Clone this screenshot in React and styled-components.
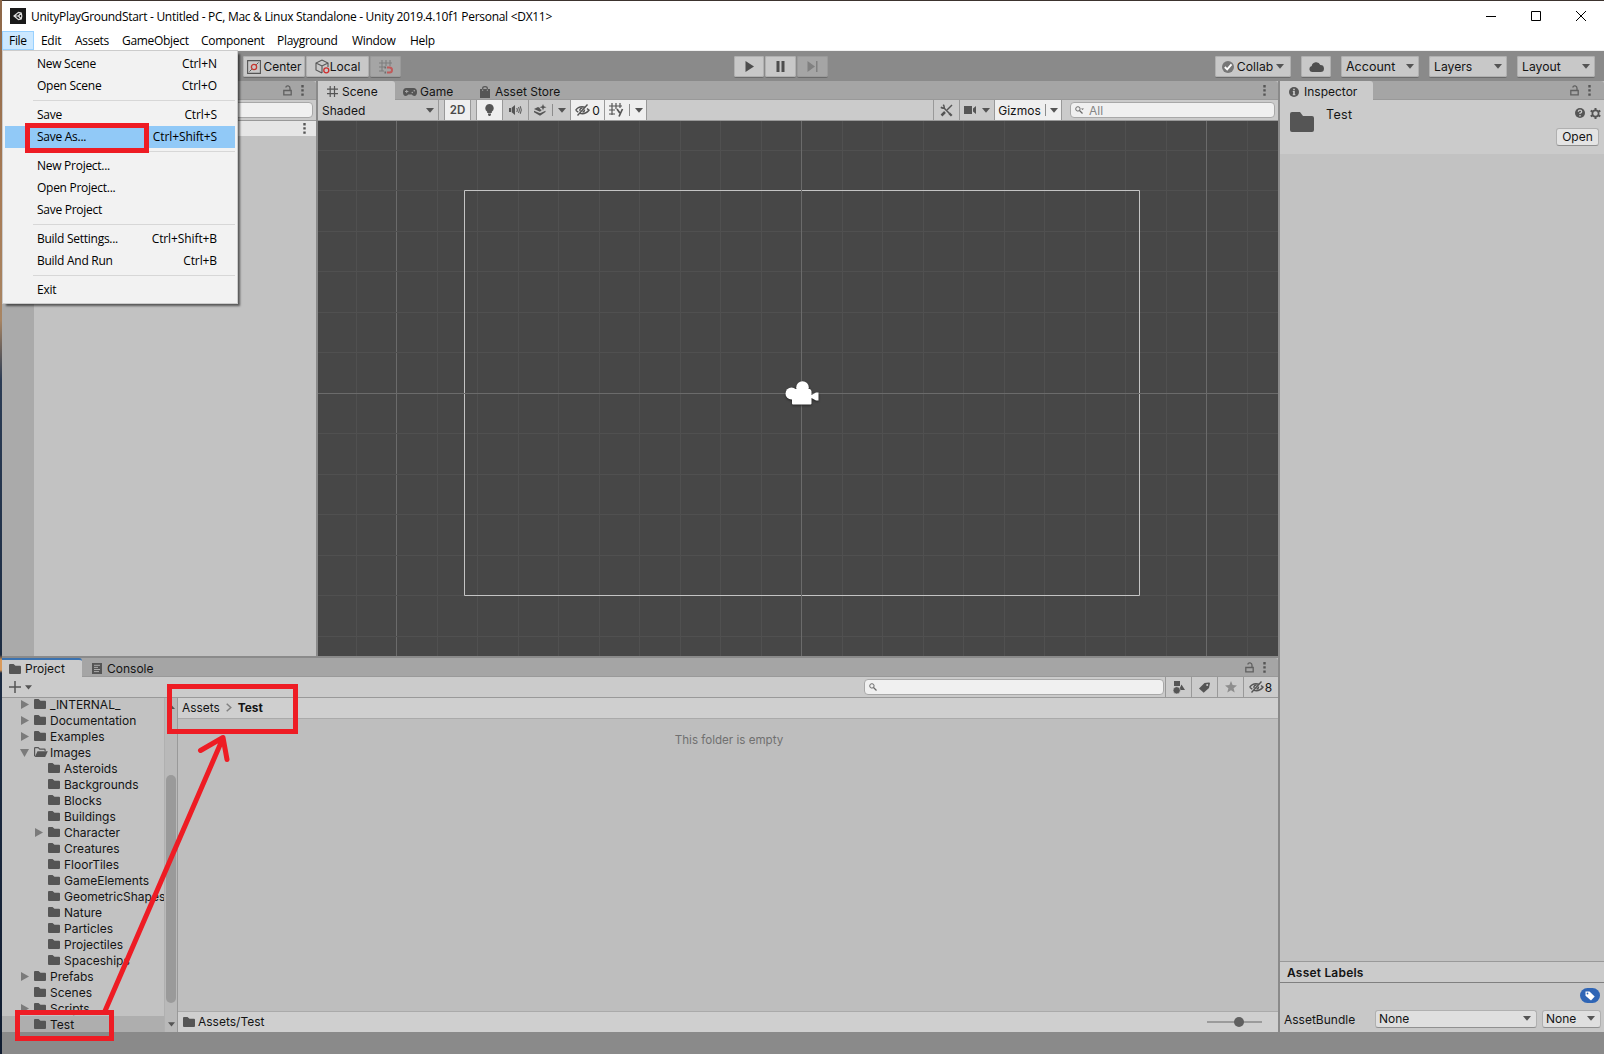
import React from "react";
import styled, { createGlobalStyle } from "styled-components";

const GlobalStyle = createGlobalStyle`
  * {
    box-sizing: border-box;
  }
  body {
    margin: 0;
    overflow: hidden;
    font-family: Inter, "Liberation Sans", sans-serif;
    font-size: 12px;
    color: #141414;
  }
  svg {
    display: block;
    flex: none;
  }
`;

const Desktop = styled.div`
  position: relative;
  display: flex;
  width: 1604px;
  height: 1054px;
`;

const DesktopEdge = styled.div`
  width: 2px;
  background: linear-gradient(#8d6748, #a87c56 200px, #a88563 320px, #2b3c55 380px, #1c2c43 655px, #d99a5b 660px, #d99a5b 670px, #1c2c43 673px, #101c30);
`;

const Window = styled.div`
  display: flex;
  flex-direction: column;
  width: 1602px;
  background: #8a8a8a;
`;

const TitleBar = styled.div`
  display: flex;
  align-items: center;
  height: 31px;
  padding: 0 18px 0 8px;
  border-top: 1px solid #3c332e;
  background: #fff;
  font-family: "Open Sans", "Noto Sans", sans-serif;
`;

const Title = styled.span`
  margin-left: 5px;
  font-size: 12px;
  letter-spacing: -0.29px;
  white-space: nowrap;
  color: #000;
`;

const WindowButtons = styled.div`
  display: flex;
  gap: 35px;
  margin-left: auto;
`;

const MenuBar = styled.div`
  display: flex;
  height: 20px;
  background: #fff;
  border-bottom: 1px solid #f0f0f0;
  font-family: "Open Sans", "Noto Sans", sans-serif;
`;

const MenuTitle = styled.div`
  width: ${(p) => p.$w}px;
  height: 19px;
  padding-left: ${(p) => (p.$open ? 6 : 7)}px;
  line-height: ${(p) => (p.$open ? 17 : 19)}px;
  letter-spacing: -0.3px;
  white-space: nowrap;
  color: #000;
  background: ${(p) => (p.$open ? "#cce8ff" : "none")};
  border: ${(p) => (p.$open ? "1px solid #99d1ff" : "none")};
`;

const Menu = styled.div`
  position: absolute;
  left: 2px;
  top: 50px;
  width: 236px;
  height: 254px;
  padding: 2px;
  border: 1px solid #ccc;
  background: #f2f2f2;
  box-shadow: 3px 3px 2px -1px rgba(0, 0, 0, 0.55);
  font-family: "Open Sans", "Noto Sans", sans-serif;
  color: #000;
`;

const MenuItem = styled.div`
  display: flex;
  justify-content: space-between;
  height: 22px;
  line-height: 22px;
  padding: 0 18px 0 32px;
  letter-spacing: -0.27px;
  background: ${(p) => (p.$active ? "#91c9f7" : "none")};
`;

const Shortcut = styled.span`
  letter-spacing: -0.1px;
`;

const MenuLine = styled.div`
  height: 1px;
  margin: 3px 0 3px 28px;
  background: #d7d7d7;
`;

const Toolbar = styled.div`
  display: flex;
  height: 30px;
  padding: 5px 9px 0 241px;
  background: #8a8a8a;
`;

const ButtonGroup = styled.div`
  display: flex;
  gap: ${(p) => p.$gap || 1}px;
  margin-left: ${(p) => p.$left || "0"};
`;

const ToolButton = styled.div`
  display: flex;
  align-items: center;
  justify-content: ${(p) => (p.$spread ? "space-between" : "center")};
  gap: ${(p) => (p.$gap === undefined ? 3 : p.$gap)}px;
  width: ${(p) => p.$w}px;
  height: 21px;
  padding: 0 ${(p) => (p.$spread ? 5 : 0)}px;
  border-radius: 2px;
  font-size: ${(p) => p.$size || 12.5}px;
  background: ${(p) => (p.$disabled ? "#a5a5a5" : "#c8c8c8")};
  box-shadow: inset 0 0 0 1px ${(p) => (p.$disabled ? "#9a9a9a" : "#b0b0b0")}, 0 1px 0 #6b6b6b;
`;

const Workspace = styled.div`
  display: flex;
  gap: 2px;
  height: 951px;
`;

const LeftSide = styled.div`
  display: flex;
  flex-direction: column;
  gap: 2px;
  width: 1276px;
`;

const TopPanels = styled.div`
  display: flex;
  gap: 2px;
  height: 575px;
`;

const Panel = styled.section`
  display: flex;
  flex-direction: column;
  width: ${(p) => p.$w}px;
  height: ${(p) => p.$h}px;
  background: #c2c2c2;
`;

const TabBar = styled.div`
  display: flex;
  height: 19px;
  flex: none;
  background: #a5a5a5;
  border-bottom: 1px solid #999;
  border-radius: 3px 3px 0 0;
`;

const Tab = styled.div`
  display: flex;
  align-items: center;
  gap: ${(p) => p.$gap || 5}px;
  width: ${(p) => p.$w}px;
  height: 19px;
  padding: 1px 0 0 ${(p) => p.$pad}px;
  white-space: nowrap;
  border-radius: 0 3px 0 0;
  border-top: ${(p) => (p.$focused ? "2px solid #3a72b0" : "none")};
  padding-top: ${(p) => (p.$focused ? 0 : 2)}px;
  background: ${(p) => (p.$active ? "#cbcbcb" : "none")};
`;

const TabActions = styled.div`
  display: flex;
  align-items: center;
  gap: 9px;
  margin-left: auto;
  padding-right: ${(p) => p.$right || 12}px;
`;

const SubBar = styled.div`
  display: flex;
  align-items: center;
  flex: none;
  height: 21px;
  padding: 0 ${(p) => p.$right || 0}px 0 ${(p) => p.$pad || 0}px;
  background: #cbcbcb;
  border-bottom: 1px solid #999;
`;

const BarCell = styled.div`
  display: flex;
  align-items: center;
  flex: none;
  justify-content: ${(p) => p.$align || "center"};
  gap: ${(p) => p.$gap || 0}px;
  width: ${(p) => p.$w}px;
  height: 20px;
  margin-left: ${(p) => p.$left || 0}px;
  padding: 0 ${(p) => p.$pad || 0}px;
  border-left: ${(p) => (p.$flat ? "none" : "1px solid #999")};
  border-right: ${(p) => (p.$end ? "1px solid #999" : "none")};
  background: ${(p) => (p.$on ? "#efefef" : "none")};
`;

const CellLine = styled.i`
  flex: none;
  width: 1px;
  height: 12px;
  background: #8c8c8c;
`;

const ModeLabel = styled.b`
  font-size: 11.5px;
  font-weight: 600;
  color: #4a4a4a;
`;

const SearchField = styled.div`
  display: flex;
  align-items: center;
  flex: none;
  gap: 5px;
  width: ${(p) => p.$w}px;
  height: 16px;
  margin-left: ${(p) => p.$left || 0}px;
  margin-right: ${(p) => p.$right || 0}px;
  padding-left: 4px;
  border: 1px solid #a8a8a8;
  border-radius: 4px;
  background: #f0f0f0;
  color: #858585;
`;

const HierarchyBody = styled.div`
  flex: 1;
  display: flex;
`;

const Gutter = styled.div`
  width: 32px;
  background: #aaa;
`;

const HierarchyRow = styled.div`
  display: flex;
  align-items: center;
  justify-content: flex-end;
  flex: 1;
  height: 15px;
  padding-right: 10px;
  background: #e6e6e6;
`;

const SceneView = styled.div`
  height: 535px;
  background: #474747;
`;

const Project = styled(Panel)`
  background: #bebebe;
`;

const ProjectBody = styled.div`
  display: flex;
  height: 334px;
`;

const Tree = styled.div`
  width: 162px;
  height: 334px;
  overflow: hidden;
  background: #c2c2c2;
`;

const TreeList = styled.div`
  margin-top: -2px;
`;

const TreeRow = styled.div`
  display: flex;
  align-items: center;
  height: 16px;
  padding-left: ${(p) => 4 + p.$depth * 14}px;
  line-height: 15px;
  white-space: nowrap;
  background: ${(p) => (p.$selected ? "#aeaeae" : "none")};
`;

const Fold = styled.span`
  width: 14px;
  flex: none;
`;

const TreeLabel = styled.span`
  margin-left: ${(p) => (p.$open ? 2 : 4)}px;
`;

const ScrollTrack = styled.div`
  display: flex;
  flex-direction: column;
  align-items: center;
  width: 14px;
  padding: 7px 0 5px;
  background: #b9b9b9;
  border-left: 1px solid #b0b0b0;
  border-right: 1px solid #999;
`;

const ScrollThumb = styled.div`
  width: 10px;
  height: 228px;
  margin: 66px 0 auto;
  border-radius: 5px;
  background: #9a9a9a;
`;

const Assets = styled.div`
  display: flex;
  flex-direction: column;
  width: 1100px;
`;

const Breadcrumbs = styled.div`
  display: flex;
  align-items: center;
  gap: 6px;
  height: 21px;
  padding: 0 0 2px 4px;
  background: #cfcfcf;
  border-bottom: 1px solid #aaa;
  font-size: 11.9px;
`;

const EmptyNote = styled.div`
  flex: 1;
  padding: 14px 0 0 2px;
  font-size: 11.6px;
  text-align: center;
  color: #707070;
`;

const AssetsFooter = styled.div`
  display: flex;
  align-items: center;
  gap: 3px;
  height: 21px;
  padding: 0 16px 1px 5px;
  background: #cfcfcf;
  border-top: 1px solid #aaa;
`;

const InspectorHeader = styled.div`
  display: flex;
  height: 54px;
  padding: 8px 3px 0 10px;
  background: #cbcbcb;
`;

const InspectorName = styled.div`
  margin: -1px 0 0 12px;
  font-size: 12.5px;
  letter-spacing: 0.3px;
`;

const HeaderTools = styled.div`
  display: flex;
  flex-direction: column;
  align-items: flex-end;
  gap: 9px;
  margin-left: auto;
`;

const OpenButton = styled.div`
  width: 43px;
  height: 18px;
  margin-right: 2px;
  line-height: 16px;
  text-align: center;
  border: 1px solid #b0b0b0;
  border-bottom-color: #8f8f8f;
  border-radius: 3px;
  background: #e4e4e4;
`;

const IconRow = styled.div`
  display: flex;
  gap: 5px;
  justify-content: flex-end;
`;

const InspectorBody = styled.div`
  flex: 1;
`;

const LabelsTitle = styled.div`
  height: 22px;
  padding-left: 7px;
  line-height: 22px;
  font-weight: 600;
  letter-spacing: 0.2px;
  border-top: 1px solid #999;
  border-bottom: 1px solid #808080;
  background: #cbcbcb;
`;

const LabelsBody = styled.div`
  height: 49px;
  padding: 5px 3px 0 4px;
  background: #c8c8c8;
`;

const LabelPill = styled.div`
  display: flex;
  align-items: center;
  justify-content: center;
  width: 20px;
  height: 15px;
  margin-left: auto;
  margin-right: 1px;
  border-radius: 8px;
  background: #2f65b5;
`;

const BundleRow = styled.div`
  display: flex;
  align-items: center;
  gap: 5px;
  margin-top: 7px;
`;

const BundleLabel = styled.span`
  width: 86px;
`;

const Select = styled.div`
  display: flex;
  align-items: center;
  justify-content: space-between;
  width: ${(p) => p.$w}px;
  height: 18px;
  padding: 0 5px 1px 3px;
  border: 1px solid #b0b0b0;
  border-bottom-color: #909090;
  border-radius: 3px;
  background: #dfdfdf;
`;

const Annotations = styled.svg`
  position: absolute;
  left: 0;
  top: 0;
`;

const INK = "#555";

const Caret = ({ w = 8 }) => (
  <svg width={w} height="5" viewBox="0 0 8 5">
    <path d="M0 0h8L4 4.8z" fill="#545454" />
  </svg>
);

const Dots = () => (
  <svg width="3" height="11" viewBox="0 0 3 11" fill={INK}>
    <path d="M.3 0h2.4v2.4H.3zM.3 4.2h2.4v2.4H.3zM.3 8.4h2.4v2.4H.3z" />
  </svg>
);

const Lock = () => (
  <svg width="9" height="11" viewBox="0 0 9 11" fill="none" stroke="#606060" strokeWidth="1.3">
    <path d="M.8 5.5h7.4v4.4H.8zM7 5.5V3.2A2.2 2.2 0 0 0 2.7 2.5" />
  </svg>
);

const Folder = ({ w = 12, h = 10 }) => (
  <svg width={w} height={h} viewBox="0 0 12 10" preserveAspectRatio="none">
    <path d="M0 1Q0 0 1 0h3.5l2 1.8H11q1 0 1 1V9q0 1-1 1H1Q0 10 0 9z" fill={INK} />
  </svg>
);

const FolderOpen = () => (
  <svg width="14" height="10" viewBox="0 0 14 10">
    <path d="M.6 9.3V1.2Q.6.6 1.2.6h3l1.6 1.6h4.6q.7 0 .7.7v1" fill="none" stroke={INK} strokeWidth="1.2" />
    <path d="M3.5 4.2h10.3L11.2 10H.8z" fill={INK} />
  </svg>
);

const Triangle = ({ open }) => (
  <svg width="9" height="9" viewBox="0 0 9 9">
    <path d={open ? "M0 1h9L4.5 9z" : "M1 0v9l8-4.5z"} fill="#7b7b7b" />
  </svg>
);

const Hash = () => (
  <svg width="11" height="11" viewBox="0 0 11 11" stroke={INK} strokeWidth="1.2">
    <path d="M3.2 0v11M7.5 0v11M0 3.2h11M0 7.6h11" />
  </svg>
);

const Gamepad = () => (
  <svg width="14" height="8" viewBox="0 0 14 8">
    <path d="M3.5 0h7Q14 .3 14 4t-2.7 4Q9.5 7.700 8.800 6.500H5.200Q4.500 7.700 2.700 8 0 8 0 4T3.500 0z" fill={INK} />
    <path d="M2 3.500h3.400M3.700 1.900v3.300" stroke="#a5a5a5" strokeWidth="1" />
    <circle cx="9.300" cy="4.500" r=".8" fill="#a5a5a5" />
    <circle cx="11.300" cy="2.800" r=".8" fill="#a5a5a5" />
  </svg>
);

const Bag = () => (
  <svg width="10" height="12" viewBox="0 0 10 12">
    <path d="M0 3h10v9H0z" fill={INK} />
    <path d="M2.700 5V2.200Q2.700.6 5 .6t2.300 1.600V5" fill="none" stroke={INK} strokeWidth="1.200" />
    <path d="M2.700 5V3.500M7.300 5V3.500" stroke="#a5a5a5" strokeWidth=".9" />
  </svg>
);

const ConsoleIcon = () => (
  <svg width="10" height="11" viewBox="0 0 10 11">
    <path d="M0 0h10v11H0z" fill={INK} />
    <path d="M2 2.300h6M2 4.400h4M2 6.500h6M2 8.600h5" stroke="#b4b4b4" strokeWidth=".9" />
  </svg>
);

const InfoIcon = () => (
  <svg width="10" height="10" viewBox="0 0 10 10">
    <circle cx="5" cy="5" r="5" fill={INK} />
    <path d="M4.200 1.700h1.600v1.500H4.200zM3.800 4.100h2V7.300h.6v1H3.700v-1h.5V5h-.4z" fill="#cbcbcb" />
  </svg>
);

const UnityIcon = () => (
  <svg width="16" height="16" viewBox="0 0 16 16">
    <path d="M0 0h16v16H0z" fill="#191919" />
    <path d="M4 8l4.500-3.700 2.700.7.600 3-.6 3-2.700.7zM4 8h4.500M8.500 8l2.700-3M8.500 8l2.700 3" fill="none" stroke="#e2e2e2" strokeWidth="1.200" />
  </svg>
);

const PivotIcon = () => (
  <svg width="14" height="14" viewBox="0 0 14 14" fill="none">
    <path d="M.6.600h12.800v12.800H.6z" stroke={INK} strokeWidth="1.100" />
    <path d="M2.500 11.500l2.300-2.300M9.200 4.800l2.300-2.300" stroke={INK} />
    <circle cx="7" cy="7" r="2.600" stroke="#c6352e" strokeWidth="1.300" />
  </svg>
);

const CubeIcon = () => (
  <svg width="15" height="15" viewBox="0 0 15 15" fill="none">
    <path d="M7 14L1 11V4l6-3 6 3v4M1 4l6 3 6-3M7 7v7" stroke={INK} strokeWidth="1.100" />
    <circle cx="11.300" cy="11.300" r="2.500" fill="#c8c8c8" stroke="#d02c2c" strokeWidth="1.300" />
  </svg>
);

const SnapIcon = () => (
  <svg width="14" height="14" viewBox="0 0 14 14" fill="none">
    <path d="M3 0v11M7 0v6M11 0v6M0 3h13M0 7h6M0 11h5" stroke="#7e7e7e" strokeWidth="1.100" />
    <path d="M8 7.500h2.500a2.500 2.500 0 0 1 0 5H8" stroke="#c05a5a" strokeWidth="2" />
    <path d="M5.500 7.500h1.600M5.500 12.500h1.600" stroke="#6e6e6e" strokeWidth="2" />
  </svg>
);

const PlayIcon = () => (
  <svg width="9" height="11" viewBox="0 0 9 11">
    <path d="M.5 0v11L9 5.500z" fill="#4d4d4d" />
  </svg>
);

const PauseIcon = () => (
  <svg width="9" height="11" viewBox="0 0 9 11">
    <path d="M.5 0h3v11h-3zM5.500 0h3v11h-3z" fill="#4d4d4d" />
  </svg>
);

const StepIcon = () => (
  <svg width="11" height="11" viewBox="0 0 11 11">
    <path d="M.5 0v11L8 5.500zM9 0h1.500v11H9z" fill="#808080" />
  </svg>
);

const CollabIcon = () => (
  <svg width="12" height="12" viewBox="0 0 12 12">
    <circle cx="6" cy="6" r="6" fill="#777" />
    <path d="M2.800 6l2.400 2.400 4.300-5" fill="none" stroke="#fff" strokeWidth="1.900" />
  </svg>
);

const CloudIcon = () => (
  <svg width="15" height="11" viewBox="0 0 15 11">
    <path d="M3 11a3 3 0 0 1-.3-5.900A4.500 4.500 0 0 1 11.300 4 3.500 3.500 0 0 1 11.600 11z" fill="#4f4f4f" />
  </svg>
);

const Bulb = () => (
  <svg width="9" height="12" viewBox="0 0 9 12">
    <path d="M4.500 0a4.200 4.200 0 0 1 2.300 7.700V9H2.200V7.700A4.200 4.200 0 0 1 4.500 0zM3 9.600h3v1L5.300 12H3.700L3 10.600z" fill={INK} />
  </svg>
);

const Speaker = () => (
  <svg width="13" height="10" viewBox="0 0 13 10">
    <path d="M0 3h2v4H0zM2.700 2.800L6 0v10L2.700 7.200z" fill={INK} />
    <path d="M7.800 3Q9 5 7.800 7M9.600 2q1.600 3 0 6M11.300 1.200q2 3.800 0 7.600" fill="none" stroke={INK} />
  </svg>
);

const Effects = () => (
  <svg width="13" height="12" viewBox="0 0 13 12">
    <path d="M0 5l4-2 1.500.8Q6 5.500 7.800 6L6 7.700zM0 6.700l6 2.500 5.500-2.500V8L6 11.800 0 8.200z" fill={INK} />
    <path d="M9 0l.9 2.300 2.600.9-2.600.9L9 6.600l-.9-2.500-2.600-.9 2.600-.9z" fill={INK} />
  </svg>
);

const EyeOff = () => (
  <svg width="15" height="12" viewBox="0 0 15 12" fill="none" stroke={INK} strokeWidth="1.400">
    <path d="M.7 6.200Q3 2.700 7 2.700q1.800 0 3 .6M12 4.500l2 1.700Q11 9.700 7.500 9.700 6 9.700 5 9.300M3.300 8.300L.7 6.200" />
    <path d="M5 7.200V5.400Q5.500 4 7.500 4M9.500 5.500Q9.500 8 7.500 8" />
    <path d="M2.500 11.500L12.500.5" />
  </svg>
);

const GridAxis = () => (
  <svg width="15" height="14" viewBox="0 0 15 14" fill="none" stroke={INK} strokeWidth="1.200">
    <path d="M3 0v12M7 0v6M11 0v5M0 3h13M0 7h6M0 11h6" />
    <path d="M8 6l2.800 4M13.500 6l-3.500 7.500" strokeWidth="1.700" />
  </svg>
);

const Tools = () => (
  <svg width="13" height="13" viewBox="0 0 13 13" fill="none" stroke={INK}>
    <path d="M3.500 3.500l6 6" strokeWidth="1.500" />
    <path d="M9.200 9.200l2.500 2.500" strokeWidth="2.300" />
    <path d="M.8 3.300q3 1.500 3.400.5T3.300.7" strokeWidth="1.600" />
    <path d="M12 1L7 6" strokeWidth="1.400" />
    <path d="M5 8l-3.500 3.500" strokeWidth="2.500" />
  </svg>
);

const VideoIcon = () => (
  <svg width="13" height="10" viewBox="0 0 13 10">
    <path d="M0 1h8v8H0zM9 3.500L12 1v8L9 6.500z" fill={INK} />
  </svg>
);

const SearchIcon = ({ menu }) => (
  <svg width="9" height="8" viewBox="0 0 9 8" fill="none" stroke="#6a6a6a">
    <circle cx="2.900" cy="2.900" r="2.200" />
    <path d="M4.500 4.500L7.500 7.500" strokeWidth="1.300" />
    {menu && <path d="M6 2.500h3L7.500 4z" fill="#6a6a6a" stroke="none" />}
  </svg>
);

const Shapes = () => (
  <svg width="12" height="13" viewBox="0 0 12 13">
    <path d="M1 0h6v5H1zM8.500 3.500L12 9H6z" fill={INK} />
    <circle cx="3.700" cy="9.300" r="3.600" fill={INK} stroke="#cbcbcb" strokeWidth=".6" />
  </svg>
);

const TagIcon = () => (
  <svg width="11" height="11" viewBox="0 0 11 11">
    <path d="M0 6.500L5.500 1 10 .5q1 0 .9 1L10 6l-5.300 4.800z" fill={INK} />
    <circle cx="8.200" cy="3" r="1" fill="#cbcbcb" />
  </svg>
);

const LabelIcon = () => (
  <svg width="10" height="10" viewBox="0 0 10 10">
    <path d="M.5.500h4L9.700 5.500 6 9.500.5 4.700z" fill="#fff" />
    <circle cx="2.500" cy="2.500" r=".9" fill="#2f65b5" />
  </svg>
);

const Star = () => (
  <svg width="12" height="12" viewBox="0 0 12 12">
    <path d="M6 0l1.600 4.100 4.400.3-3.400 2.800L9.700 11.500 6 9.200l-3.700 2.300 1.100-4.300L0 4.400l4.400-.3z" fill="#8e8e8e" />
  </svg>
);

const HelpIcon = () => (
  <svg width="10" height="10" viewBox="0 0 10 10">
    <circle cx="5" cy="5" r="5" fill={INK} />
    <path d="M3.300 3.700Q3.400 2.200 5 2.200t1.700 1.500Q6.700 4.700 5 5.200v.9M5 7v1.400" fill="none" stroke="#cbcbcb" strokeWidth="1.300" />
  </svg>
);

const Gear = () => (
  <svg width="11" height="11" viewBox="0 0 11 11" fill="none" stroke={INK}>
    <circle cx="5.500" cy="5.500" r="3.100" strokeWidth="1.700" />
    <path d="M5.500 0v2M5.500 9v2M.7 2.700l1.800 1M8.500 7.300l1.800 1M.7 8.300l1.800-1M8.500 3.700l1.800-1" strokeWidth="2" />
  </svg>
);

const PlusIcon = () => (
  <svg width="12" height="12" viewBox="0 0 12 12" stroke={INK} strokeWidth="1.500">
    <path d="M6 0v12M0 6h12" />
  </svg>
);

const Slider = () => (
  <svg width="55" height="10" viewBox="0 0 55 10">
    <path d="M0 5h55" stroke="#8a8a8a" strokeWidth="1.500" />
    <circle cx="32" cy="5" r="5" fill="#606060" />
  </svg>
);

// grid is centred on the scene origin, every tenth line is a major one
const ORIGIN = { x: 483.5, y: 272.4 };
const STEP = 40.5;
const steps = Array.from({ length: 25 }, (_, i) => i - 12);

const SceneCanvas = () => (
  <svg width="960" height="535" viewBox="0 0 960 535">
    {steps.map((n) => {
      const x = Math.floor(ORIGIN.x + n * STEP) + 0.5;
      const y = Math.floor(ORIGIN.y + n * STEP) + 0.5;
      const color = n % 10 === 0 ? "#6b6b6b" : "#505050";
      return (
        <g key={n} stroke={color}>
          <path d={`M${x} 0V535`} />
          <path d={`M0 ${y}H960`} />
        </g>
      );
    })}
    <path d="M146.500 69.500H821.500V474.500H146.500z" fill="none" stroke="#c4c4c4" />
    <path d="M483.500 0V535M0 272.500H960" stroke="#6b6b6b" />
    <g fill="#fff" style={{ filter: "drop-shadow(0 1px 1px #222)" }}>
      <circle cx="473.500" cy="272.500" r="6" />
      <circle cx="484.500" cy="266.500" r="6.300" />
      <path d="M474 268h18q1.500 1 1.500 2.500v3.500l4.500-2.500h2.500v8H498l-4.500-2.500v5.500q0 1-1 1H475q-1 0-1-1z" />
    </g>
  </svg>
);

const menus = [
  ["File", 32], ["Edit", 34], ["Assets", 47], ["GameObject", 79],
  ["Component", 76], ["Playground", 75], ["Window", 58], ["Help", 39],
];

const fileMenu = [
  ["New Scene", "Ctrl+N"],
  ["Open Scene", "Ctrl+O"],
  null,
  ["Save", "Ctrl+S"],
  ["Save As...", "Ctrl+Shift+S"],
  null,
  ["New Project..."],
  ["Open Project..."],
  ["Save Project"],
  null,
  ["Build Settings...", "Ctrl+Shift+B"],
  ["Build And Run", "Ctrl+B"],
  null,
  ["Exit"],
];

// [name, depth, fold state]
const folders = [
  ["_INTERNAL_", 1, "closed"],
  ["Documentation", 1, "closed"],
  ["Examples", 1, "closed"],
  ["Images", 1, "open"],
  ["Asteroids", 2],
  ["Backgrounds", 2],
  ["Blocks", 2],
  ["Buildings", 2],
  ["Character", 2, "closed"],
  ["Creatures", 2],
  ["FloorTiles", 2],
  ["GameElements", 2],
  ["GeometricShapes", 2],
  ["Nature", 2],
  ["Particles", 2],
  ["Projectiles", 2],
  ["Spaceships", 2],
  ["Prefabs", 1, "closed"],
  ["Scenes", 1],
  ["Scripts", 1, "closed"],
  ["Test", 1],
];

const FileMenu = () => (
  <Menu>
    {fileMenu.map((item, i) =>
      item ? (
        <MenuItem key={i} $active={item[0] === "Save As..."}>
          <span>{item[0]}</span>
          <Shortcut>{item[1]}</Shortcut>
        </MenuItem>
      ) : (
        <MenuLine key={i} />
      )
    )}
  </Menu>
);

const MainToolbar = () => (
  <Toolbar>
    <ButtonGroup>
      <ToolButton $w={62} $size={11.9}><PivotIcon />Center</ToolButton>
      <ToolButton $w={63} $size={12} $gap={0}><CubeIcon />Local</ToolButton>
      <ToolButton $w={31} $disabled><SnapIcon /></ToolButton>
    </ButtonGroup>
    <ButtonGroup $left="333px">
      <ToolButton $w={30}><PlayIcon /></ToolButton>
      <ToolButton $w={31}><PauseIcon /></ToolButton>
      <ToolButton $w={31} $disabled><StepIcon /></ToolButton>
    </ButtonGroup>
    <ButtonGroup $left="auto" $gap={10}>
      <ToolButton $w={76} $size={12.2}><CollabIcon />Collab <Caret /></ToolButton>
      <ToolButton $w={30}><CloudIcon /></ToolButton>
      <ToolButton $w={78} $spread>Account <Caret /></ToolButton>
      <ToolButton $w={78} $size={12.2} $spread>Layers <Caret /></ToolButton>
      <ToolButton $w={78} $size={12.2} $spread>Layout <Caret /></ToolButton>
    </ButtonGroup>
  </Toolbar>
);

const Hierarchy = () => (
  <Panel $w={314} $h={575}>
    <TabBar>
      <TabActions><Lock /><Dots /></TabActions>
    </TabBar>
    <SubBar $pad={34}><SearchField $w={277} /></SubBar>
    <HierarchyBody>
      <Gutter />
      <HierarchyRow><Dots /></HierarchyRow>
    </HierarchyBody>
  </Panel>
);

const Scene = () => (
  <Panel $w={960} $h={575}>
    <TabBar>
      <Tab $active $w={77} $pad={9} $gap={4}><Hash />Scene</Tab>
      <Tab $w={77} $pad={8} $gap={3}><Gamepad />Game</Tab>
      <Tab $w={100} $pad={8} $gap={5}><Bag />Asset Store</Tab>
      <TabActions><Dots /></TabActions>
    </TabBar>
    <SubBar $right={3}>
      <BarCell $w={121} $pad={4} $align="space-between" $flat $end>Shaded <Caret /></BarCell>
      <BarCell $w={27} $left={5} $on $end><ModeLabel>2D</ModeLabel></BarCell>
      <BarCell $w={26} $left={5} $on><Bulb /></BarCell>
      <BarCell $w={26}><Speaker /></BarCell>
      <BarCell $w={42} $gap={5} $align="flex-start" $pad={5}><Effects /><CellLine /><Caret /></BarCell>
      <BarCell $w={34} $on $gap={2}><EyeOff />0</BarCell>
      <BarCell $w={43} $on $gap={5} $end><GridAxis /><CellLine /><Caret /></BarCell>
      <BarCell $w={26} $left={286}><Tools /></BarCell>
      <BarCell $w={35} $gap={5}><VideoIcon /><Caret /></BarCell>
      <BarCell $w={68} $on $gap={4} $end>Gizmos<CellLine /><Caret /></BarCell>
      <SearchField $w={205} $left={8}><SearchIcon menu />All</SearchField>
    </SubBar>
    <SceneView><SceneCanvas /></SceneView>
  </Panel>
);

const ProjectPanel = () => (
  <Project $w={1276} $h={374}>
    <TabBar>
      <Tab $active $focused $w={80} $pad={7} $gap={4}><Folder />Project</Tab>
      <Tab $w={90} $pad={10} $gap={5}><ConsoleIcon />Console</Tab>
      <TabActions><Lock /><Dots /></TabActions>
    </TabBar>
    <SubBar $pad={7}>
      <PlusIcon />
      <BarCell $w={15} $flat><Caret w={7} /></BarCell>
      <SearchField $w={300} $left={828} $right={1}><SearchIcon /></SearchField>
      <BarCell $w={26}><Shapes /></BarCell>
      <BarCell $w={26}><TagIcon /></BarCell>
      <BarCell $w={26}><Star /></BarCell>
      <BarCell $w={34} $gap={1}><EyeOff />8</BarCell>
    </SubBar>
    <ProjectBody>
      <Tree>
        <TreeList>
          {folders.map(([name, depth, fold]) => (
            <TreeRow key={name} $depth={depth} $selected={name === "Test"}>
              <Fold>{fold && <Triangle open={fold === "open"} />}</Fold>
              {fold === "open" ? <FolderOpen /> : <Folder />}
              <TreeLabel $open={fold === "open"}>{name}</TreeLabel>
            </TreeRow>
          ))}
        </TreeList>
      </Tree>
      <ScrollTrack>
        <svg width="7" height="4" viewBox="0 0 7 4"><path d="M0 4h7L3.500 0z" fill={INK} /></svg>
        <ScrollThumb />
        <Caret w={7} />
      </ScrollTrack>
      <Assets>
        <Breadcrumbs>
          Assets
          <svg width="6" height="9" viewBox="0 0 6 9" fill="none" stroke="#808080" strokeWidth="1.500">
            <path d="M.7.700L4.800 4.500.7 8.300" />
          </svg>
          <b>Test</b>
        </Breadcrumbs>
        <EmptyNote>This folder is empty</EmptyNote>
        <AssetsFooter>
          <Folder />Assets/Test
          <ButtonGroup $left="auto"><Slider /></ButtonGroup>
        </AssetsFooter>
      </Assets>
    </ProjectBody>
  </Project>
);

const Inspector = () => (
  <Panel $w={324} $h={951}>
    <TabBar>
      <Tab $active $w={93} $pad={9}><InfoIcon />Inspector</Tab>
      <TabActions $right={13}><Lock /><Dots /></TabActions>
    </TabBar>
    <InspectorHeader>
      <svg width="24" height="24" viewBox="0 0 24 24">
        <path d="M0 6q0-2 2-2h8l3 4h9q2 0 2 2v12q0 2-2 2H2q-2 0-2-2z" fill={INK} />
      </svg>
      <InspectorName>Test</InspectorName>
      <HeaderTools>
        <IconRow><HelpIcon /><Gear /></IconRow>
        <OpenButton>Open</OpenButton>
      </HeaderTools>
    </InspectorHeader>
    <InspectorBody />
    <LabelsTitle>Asset Labels</LabelsTitle>
    <LabelsBody>
      <LabelPill><LabelIcon /></LabelPill>
      <BundleRow>
        <BundleLabel>AssetBundle</BundleLabel>
        <Select $w={162}>None <Caret /></Select>
        <Select $w={59}>None <Caret /></Select>
      </BundleRow>
    </LabelsBody>
  </Panel>
);

const App = () => {
  return (
    <>
      <GlobalStyle />
      <Desktop>
        <DesktopEdge />
        <Window>
          <TitleBar>
            <UnityIcon />
            <Title>UnityPlayGroundStart - Untitled - PC, Mac &amp; Linux Standalone - Unity 2019.4.10f1 Personal &lt;DX11&gt;</Title>
            <WindowButtons>
              <svg width="10" height="10" stroke="#000"><path d="M0 5.500h10" /></svg>
              <svg width="10" height="10" stroke="#000" fill="none"><path d="M.5.500h9v9h-9z" /></svg>
              <svg width="10" height="10" stroke="#000"><path d="M0 0l10 10M10 0L0 10" /></svg>
            </WindowButtons>
          </TitleBar>
          <MenuBar>
            {menus.map(([name, w]) => (
              <MenuTitle key={name} $w={w} $open={name === "File"}>{name}</MenuTitle>
            ))}
          </MenuBar>
          <MainToolbar />
          <Workspace>
            <LeftSide>
              <TopPanels>
                <Hierarchy />
                <Scene />
              </TopPanels>
              <ProjectPanel />
            </LeftSide>
            <Inspector />
          </Workspace>
        </Window>
        <FileMenu />
        <Annotations width="1604" height="1054" fill="none" stroke="#ee1c24" strokeWidth="5">
          <path d="M27.500 125.500h119v25h-119z" />
          <path d="M169.500 686.500h126v45h-126z" />
          <path d="M17.500 1012.500h94v26h-94z" />
          <path d="M105 1011L223 738M200.500 750.500L223 737.500L227 759.500" strokeLinecap="round" strokeLinejoin="round" />
        </Annotations>
      </Desktop>
    </>
  );
};

export default App;
